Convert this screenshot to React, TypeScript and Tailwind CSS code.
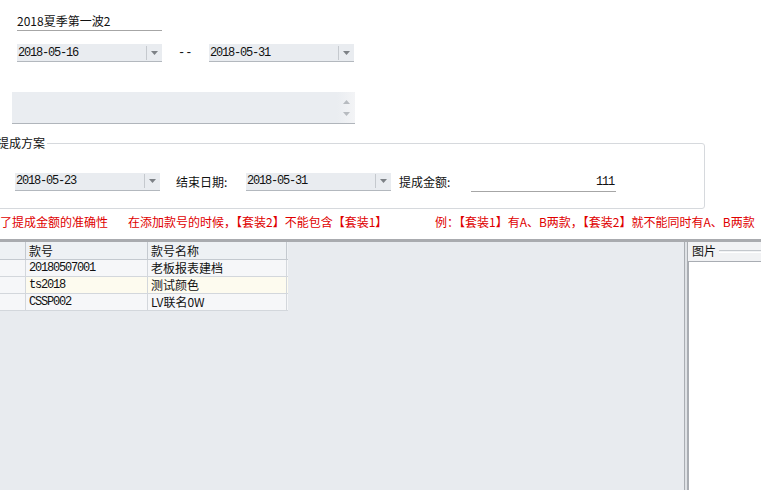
import React from "react";

const CJK = "font-['SimSun','Noto_Sans_CJK_SC',sans-serif]";
const MONO = "font-['Liberation_Mono',monospace] text-[12px] tracking-[-1.2px]";

function Arrow() {
  return (
    <svg width="7" height="4" viewBox="0 0 7 4" className="block">
      <path d="M0 0 H7 L3.5 4 Z" fill="#7d8186" />
    </svg>
  );
}

function DateBox({ value }: { value: string }) {
  return (
    <div className="w-[145px] h-[18px] bg-[#e9ecf0] border-b border-[#b3b8be] flex items-center">
      <div className={`flex-1 pl-[1px] ${MONO} text-[#111] leading-[16px]`}>{value}</div>
      <div className="w-[16px] h-[14px] border-l border-[#c5c9ce] flex items-center justify-center">
        <Arrow />
      </div>
    </div>
  );
}

const rows = [
  { code: "20180507001", name: "老板报表建档", bg: "bg-[#f6f7f9]" },
  { code: "ts2018", name: "测试颜色", bg: "bg-[#fdfbef]" },
  { code: "CSSP002", name: "LV联名0W", bg: "bg-[#f6f7f9]" },
];

export default function App() {
  return (
    <div className={`w-[761px] h-[490px] bg-white overflow-hidden flex flex-col text-black ${CJK} text-[12px]`}>
      {/* title input */}
      <div className="pl-[17px] pt-[12px]">
        <div className="w-[145px] h-[19px] border-b border-[#a6a6a6] flex items-center leading-[16px]">
          <span className="text-[12px] text-[#111]">2018夏季第一波2</span>
        </div>
      </div>

      {/* date range */}
      <div className="pl-[17px] mt-[13px] flex items-center">
        <DateBox value="2018-05-16" />
        <span className={`ml-[16px] w-[31px] ${MONO} tracking-[0px] text-[#111]`}>--</span>
        <DateBox value="2018-05-31" />
      </div>

      {/* spinner box */}
      <div className="ml-[12px] mt-[30px] w-[343px] h-[32px] bg-[#eaedf1] border-b border-[#b0b5bb] flex justify-end">
        <div className="w-[18px] flex flex-col items-center justify-center gap-[8px] bg-gradient-to-r from-[#eaedf1] to-[#f3f4f6]">
          <svg width="7" height="4" viewBox="0 0 7 4"><path d="M0 4 H7 L3.5 0 Z" fill="#b7bbc0" /></svg>
          <svg width="7" height="4" viewBox="0 0 7 4"><path d="M0 0 H7 L3.5 4 Z" fill="#b7bbc0" /></svg>
        </div>
      </div>

      {/* group box */}
      <div className="relative ml-[-10px] mt-[19px] w-[715px] h-[66px] border border-[#d6d9dd] rounded-[3px]">
        <div className="absolute left-[6px] top-[-9px] bg-white pr-[2px] leading-[16px] text-[12px] text-[#111]">提成方案</div>
        <div className="pl-[24px] pt-[27px] flex items-center">
          <DateBox value="2018-05-23" />
          <span className="ml-[16px] w-[70px] text-[12px] text-[#111]">结束日期:</span>
          <DateBox value="2018-05-31" />
          <span className="ml-[8px] w-[72px] text-[12px] text-[#111]">提成金额:</span>
          <div className="w-[145px] h-[19px] mt-[2px] border-b border-[#a6a6a6] flex items-center justify-end pr-[2px]">
            <span className={`${MONO} text-[#111]`}>111</span>
          </div>
        </div>
      </div>

      {/* red notes */}
      <div className="mt-[5px] h-[16px] flex items-center whitespace-nowrap text-[12px] text-[#e00000] leading-[16px]">
        <span className="w-[128px] shrink-0">了提成金额的准确性</span>
        <span className="w-[307px] shrink-0">在添加款号的时候，【套装2】不能包含【套装1】</span>
        <span className="shrink-0">例：【套装1】有A、B两款，【套装2】就不能同时有A、B两款</span>
      </div>

      {/* divider bar */}
      <div className="mt-[9px] h-[3px] bg-[#a9abaf]" />

      {/* bottom area */}
      <div className="flex-1 flex">
        <div className="w-[684px] bg-[#e8ebef]">
          <div className="w-[288px] text-[12px] text-[#111]">
            <div className="flex h-[18px] border-b border-[#c4c9cf] bg-[#eef1f4]">
              <div className="w-[26px] border-r border-[#c4c9cf]" />
              <div className="w-[122px] border-r border-[#c4c9cf] pl-[3px] leading-[17px]">款号</div>
              <div className="w-[139px] border-r border-[#c4c9cf] pl-[3px] leading-[17px]">款号名称</div>
            </div>
            {rows.map((r) => (
              <div key={r.code} className={`flex h-[17px] border-b border-[#d3d7dc] ${r.bg}`}>
                <div className="w-[26px] border-r border-[#d3d7dc] bg-[#f6f7f9]" />
                <div className={`w-[122px] border-r border-[#d3d7dc] pl-[3px] leading-[16px] ${MONO}`}>{r.code}</div>
                <div className="w-[139px] border-r border-[#d3d7dc] pl-[3px] leading-[16px]">{r.name}</div>
              </div>
            ))}
          </div>
        </div>
        <div className="w-[4px] border-l border-r border-[#a9adb2] bg-[#dfe2e6]" />
        <div className="flex-1 flex flex-col bg-[#f1f2f4]">
          <div className="h-[18px] flex items-center">
            <span className="pl-[4px] pr-[3px] text-[12px] text-[#111] leading-[16px]">图片</span>
            <div className="flex-1 h-[3px] border-t border-[#c4c8cd] border-b border-b-white mt-[1px]" />
          </div>
          <div className="flex-1 mt-[1px] bg-white border-l border-t border-[#a9adb3]" />
        </div>
      </div>
    </div>
  );
}
